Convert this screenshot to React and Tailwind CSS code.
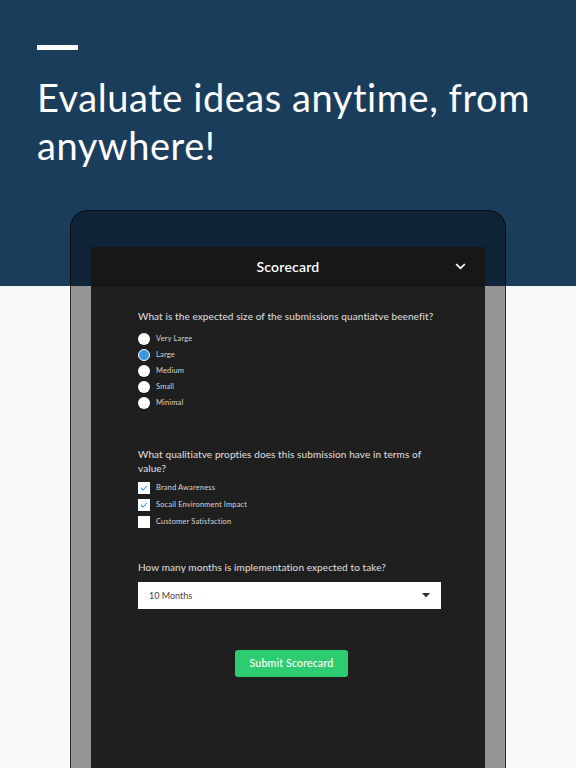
import React from 'react';

const sizes = ['Very Large', 'Large', 'Medium', 'Small', 'Minimal'];
const props = [
  { label: 'Brand Awareness', checked: true },
  { label: 'Socail Environment Impact', checked: true },
  { label: 'Customer Satisfaction', checked: false },
];

const Radio = ({ label, selected }) => (
  <div className="flex items-center h-4">
    {selected ? (
      <span className="w-3 h-3 rounded-full bg-[#3d97dd] border-[1.5px] border-white"></span>
    ) : (
      <span className="w-3 h-3 rounded-full bg-white"></span>
    )}
    <span className="ml-[6px] text-[7.5px] tracking-[0.15px] text-[#d6d6d6]">{label}</span>
  </div>
);

const Checkbox = ({ label, checked }) => (
  <div className="flex items-center h-[17px]">
    <span className="w-3 h-3 bg-white flex items-center justify-center">
      {checked && (
        <svg width="8" height="8" viewBox="0 0 10 10" fill="none">
          <path d="M1.5 5.2L4 7.5L8.5 2.5" stroke="#3d97dd" strokeWidth="1.4" strokeLinecap="round" strokeLinejoin="round" />
        </svg>
      )}
    </span>
    <span className="ml-[6px] text-[7.5px] tracking-[0.15px] text-[#d6d6d6]">{label}</span>
  </div>
);

const App = () => {
  return (
    <div className="w-[576px] h-[768px] overflow-hidden bg-[linear-gradient(to_bottom,#1a3d5c_286px,#f8f8f8_286px)] font-['Lato',sans-serif]">
      {/* Hero */}
      <div className="pt-[45px] pl-[37px]">
        <div className="w-[41px] h-[5px] bg-white"></div>
        <h1 className="mt-[23px] text-[38px] leading-[48px] text-white tracking-[0.55px]">
          Evaluate ideas anytime, from anywhere!
        </h1>
      </div>

      {/* Tablet */}
      <div className="mt-[41px] ml-[70px] w-[436px] h-[600px] rounded-t-[18px] border border-black/70 bg-black/40 pt-[36px] pl-[20px]">
        <div className="w-[394px] h-[560px] bg-[#1f1f1f]">
          {/* Header */}
          <div className="h-10 bg-[#171717] flex items-center justify-center relative">
            <span className="text-[14px] font-semibold text-white tracking-[0.2px] -mt-[2px]">Scorecard</span>
            <svg className="absolute right-[18px] top-[13px]" width="13" height="13" viewBox="0 0 24 24" fill="none">
              <path d="M5 8.5L12 15.5L19 8.5" stroke="white" strokeWidth="3.2" strokeLinecap="square" />
            </svg>
          </div>

          {/* Form */}
          <div className="pl-[47px] pr-[44px] pt-[22px]">
            <p className="text-[10px] leading-[14px] tracking-[0.1px] text-[#e0e0e0]">
              What is the expected size of the submissions quantiatve beenefit?
            </p>
            <div className="mt-[8px] flex flex-col">
              {sizes.map((s) => (
                <Radio key={s} label={s} selected={s === 'Large'} />
              ))}
            </div>

            <p className="mt-[36px] text-[10px] leading-[14px] tracking-[0.1px] text-[#e0e0e0] pr-[8px]">
              What qualitiatve propties does this submission have in terms of value?
            </p>
            <div className="mt-[4px] flex flex-col">
              {props.map((p) => (
                <Checkbox key={p.label} label={p.label} checked={p.checked} />
              ))}
            </div>

            <p className="mt-[30px] text-[10px] leading-[14px] tracking-[0.1px] text-[#e0e0e0]">
              How many months is implementation expected to take?
            </p>
            <div className="mt-[8px] h-[27px] bg-white flex items-center justify-between pl-[11px] pr-[11px]">
              <span className="text-[9px] text-[#444]">10 Months</span>
              <svg width="8" height="5" viewBox="0 0 8 5">
                <path d="M0 0H8L4 4.5Z" fill="#333" />
              </svg>
            </div>

            <div className="mt-[41px] flex justify-center pl-[4px]">
              <button className="w-[113px] h-[27px] rounded-[3px] bg-[#2ecc71] text-white text-[10.5px] font-medium tracking-[0.2px]">
                Submit Scorecard
              </button>
            </div>
          </div>
        </div>
      </div>
    </div>
  );
};

export default App;
